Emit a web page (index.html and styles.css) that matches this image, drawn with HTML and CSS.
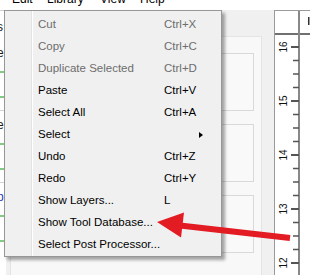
FILE: index.html
```html
<!DOCTYPE html>
<html lang="en">
<head>
    <meta charset="UTF-8">
    <title>Edit menu</title>
    <link rel="stylesheet" href="styles.css">
</head>
<body>
    <!-- Main menu bar (only the bottom of the labels shows) -->
    <div class="menubar">
        <div class="menubar-items">
            <span class="menubar-item">Edit</span>
            <span class="menubar-item">Library</span>
            <span class="menubar-item">View</span>
            <span class="menubar-item">Help</span>
        </div>
    </div>

    <div class="workspace">
        <!-- Project tree, mostly hidden under the menu -->
        <div class="tree">
            <div class="tree-group tree-group-first">
                <div class="tree-label tree-stub">s</div>
                <div class="tree-label">e</div>
                <div class="tree-leaf"></div>
                <div class="tree-leaf tree-leaf-last"></div>
            </div>
            <div class="tree-group tree-group-mid">
                <div class="tree-label">e</div>
                <div class="tree-leaf"></div>
                <div class="tree-leaf tree-leaf-last"></div>
            </div>
            <div class="tree-group">
                <div class="tree-label tree-label-blue">p</div>
                <div class="tree-leaf"></div>
                <div class="tree-leaf tree-leaf-last"></div>
            </div>
        </div>

        <!-- Property panel with empty cards -->
        <div class="canvas-area">
            <div class="panel">
                <div class="card"></div>
                <div class="card"></div>
                <div class="card"></div>
            </div>
        </div>

        <!-- Vertical ruler -->
        <div class="ruler">
            <svg width="35" height="264" viewBox="0 0 35 264">
                <rect x="33" y="6" width="1.5" height="8" fill="#333"/>
                <rect x="0" y="22" width="35" height="2" fill="#707070"/>
                <rect x="23" y="0" width="2" height="264" fill="#888"/>
                <g id="ticks" fill="#555"></g>
                <g id="labels" font-family="Liberation Sans, Arial, sans-serif" font-size="10" fill="#111"></g>
            </svg>
        </div>
    </div>

    <!-- Edit drop-down menu -->
    <div class="menu">
        <div class="menu-item disabled"><span class="menu-label">Cut</span><span class="menu-key">Ctrl+X</span></div>
        <div class="menu-item disabled"><span class="menu-label">Copy</span><span class="menu-key">Ctrl+C</span></div>
        <div class="menu-item disabled"><span class="menu-label">Duplicate Selected</span><span class="menu-key">Ctrl+D</span></div>
        <div class="menu-item"><span class="menu-label">Paste</span><span class="menu-key">Ctrl+V</span></div>
        <div class="menu-item"><span class="menu-label">Select All</span><span class="menu-key">Ctrl+A</span></div>
        <div class="menu-item"><span class="menu-label">Select</span><span class="menu-key"><span class="submenu-arrow"></span></span></div>
        <div class="menu-item"><span class="menu-label">Undo</span><span class="menu-key">Ctrl+Z</span></div>
        <div class="menu-item"><span class="menu-label">Redo</span><span class="menu-key">Ctrl+Y</span></div>
        <div class="menu-item"><span class="menu-label">Show Layers...</span><span class="menu-key">L</span></div>
        <div class="menu-item"><span class="menu-label">Show Tool Database...</span><span class="menu-key"></span></div>
        <div class="menu-item"><span class="menu-label">Select Post Processor...</span><span class="menu-key"></span></div>
    </div>

    <!-- Red callout arrow -->
    <svg class="callout" width="310" height="275" viewBox="0 0 310 275">
        <line x1="180" y1="225.5" x2="290" y2="238" stroke="#e31b23" stroke-width="6"/>
        <polygon points="157,222 184,212.5 181,237.5" fill="#e31b23"/>
    </svg>

    <script>
        // Build the ruler ticks: one major tick per unit, three minor ticks between
        const ticks = document.getElementById('ticks');
        const labels = document.getElementById('labels');
        const ns = 'http://www.w3.org/2000/svg';
        const step = 54;
        const first = 36;

        for (let i = 0; i < 5; i++) {
            const y = first + i * step;

            const major = document.createElementNS(ns, 'rect');
            major.setAttribute('x', 16);
            major.setAttribute('y', y - 1);
            major.setAttribute('width', 8);
            major.setAttribute('height', 2);
            ticks.appendChild(major);

            const label = document.createElementNS(ns, 'text');
            label.setAttribute('x', 8);
            label.setAttribute('y', y);
            label.setAttribute('text-anchor', 'middle');
            label.setAttribute('dominant-baseline', 'central');
            label.setAttribute('transform', `rotate(-90 8 ${y})`);
            label.textContent = 16 - i;
            labels.appendChild(label);

            for (let k = 1; k < 4; k++) {
                const minor = document.createElementNS(ns, 'rect');
                minor.setAttribute('x', 18);
                minor.setAttribute('y', y + k * step / 4 - 0.75);
                minor.setAttribute('width', 6);
                minor.setAttribute('height', 1.5);
                ticks.appendChild(minor);
            }
        }
    </script>
</body>
</html>
```

FILE: styles.css
```css
/* Base page */
body {
    margin: 0;
    width: 310px;
    height: 275px;
    overflow: hidden;
    position: relative;
    background-color: #f0f0f0;
    font-family: 'Liberation Sans', Arial, sans-serif;
    font-size: 11.5px;
    color: #000;
}

/* Menu bar */
.menubar {
    height: 10px;
    overflow: hidden;
    background-color: #ffffff;
}

.menubar-items {
    display: flex;
    margin-top: -8px;
    padding-left: 12px;
    font-size: 12px;
    line-height: 14px;
}

.menubar-item:nth-child(1) { width: 35px; }
.menubar-item:nth-child(2) { width: 53px; }
.menubar-item:nth-child(3) { width: 40px; }

/* Workspace row */
.workspace {
    display: flex;
    height: 265px;
}

/* Tree panel */
.tree {
    width: 6px;
    overflow: hidden;
    background-color: #ffffff;
    border-top: 1px solid #cfcfcf;
    box-sizing: border-box;
}

.tree-group {
    box-sizing: border-box;
    padding-top: 8px;
    border-bottom: 1px solid #d4d4d4;
}

.tree-group-first {
    height: 100px;
    padding-top: 10px;
}

.tree-group-mid {
    height: 72px;
}

.tree-group:last-child {
    border-bottom: none;
}

.tree-label {
    height: 12px;
    line-height: 12px;
    font-size: 12px;
    margin-left: -3px;
    color: #1b1b1b;
}

.tree-stub {
    margin-bottom: 14px;
}

.tree-label-blue {
    color: #2836b8;
}

.tree-leaf {
    height: 2px;
    width: 4px;
    margin-top: 12px;
    background-color: #86c986;
}

.tree-leaf-last {
    margin-top: 23px;
}

/* Center panel */
.canvas-area {
    flex: 1;
    padding: 26px 12px 0 4px;
}

.panel {
    height: 100%;
    box-sizing: border-box;
    padding: 16px 7px 0 7px;
    background-color: #f8f8f8;
    border: 1px solid #e4e4e4;
    border-bottom: none;
    display: flex;
    flex-direction: column;
    gap: 13px;
}

.card {
    height: 58px;
    box-sizing: border-box;
    background-color: #f9f9f9;
    border: 1px solid #d9d9d9;
}

/* Ruler */
.ruler {
    width: 35px;
    background-color: #ffffff;
    border-left: 1px solid #9a9a9a;
    border-top: 1px solid #9a9a9a;
}

.ruler svg {
    display: block;
}

/* Drop-down menu */
.menu {
    position: absolute;
    left: 4px;
    top: 10px;
    width: 212px;
    padding: 2px 2px 1px 2px;
    border: 1px solid #979797;
    background: linear-gradient(to right, #f0f0f0 26px, #e2e3e3 26px, #e2e3e3 27px, #ffffff 27px, #ffffff 28px, #f0f0f0 28px);
    box-shadow: 3px 3px 3px rgba(0, 0, 0, 0.35);
}

.menu-item {
    display: flex;
    height: 22px;
    line-height: 22px;
    padding-left: 31px;
    white-space: nowrap;
}

.menu-item.disabled {
    color: #6d6d6d;
}

.menu-label {
    width: 126px;
}

.menu-key {
    flex: 1;
}

.submenu-arrow {
    display: inline-block;
    margin-left: 35px;
    width: 0;
    height: 0;
    border-top: 3.5px solid transparent;
    border-bottom: 3.5px solid transparent;
    border-left: 4px solid #000;
    vertical-align: middle;
}

/* Callout arrow over everything */
.callout {
    position: absolute;
    left: 0;
    top: 0;
    pointer-events: none;
}
```
